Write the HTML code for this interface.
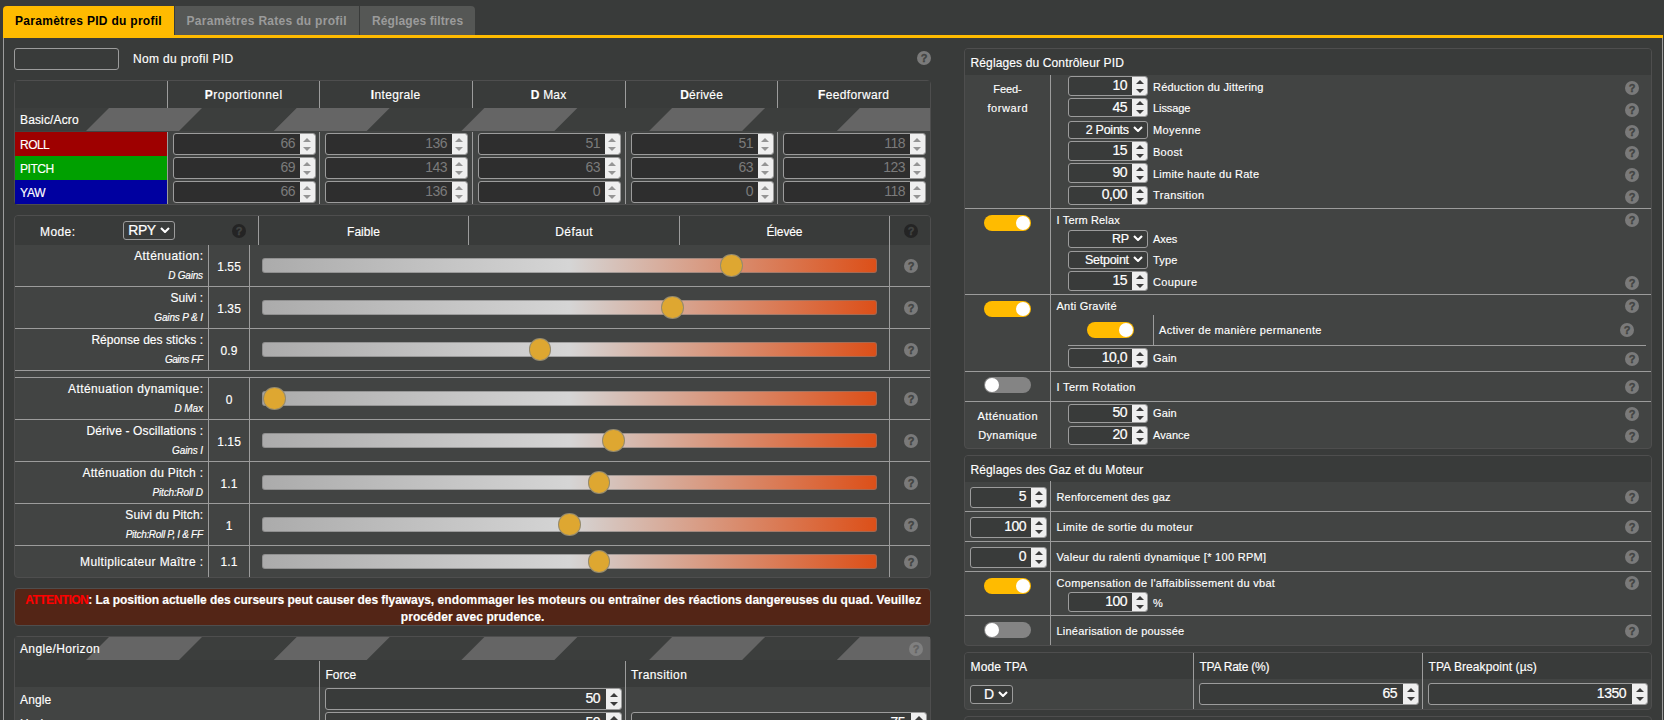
<!DOCTYPE html>
<html lang="fr"><head><meta charset="utf-8"><title>Betaflight - Réglages PID</title>
<style>
html,body{margin:0;padding:0;}
body{width:1664px;height:720px;overflow:hidden;background:#393b3a;position:relative;
 font-family:"Liberation Sans",sans-serif;font-size:12px;color:#fff;}
div,svg.abs{position:absolute;box-sizing:border-box;}
.t{height:20px;line-height:20px;white-space:nowrap;font-size:12px;-webkit-text-stroke:0.15px;}
.t.s11{font-size:11px;}
.t.sub{font-size:10px;font-style:italic;}
.t.b{font-weight:bold;}
.t b{font-weight:bold;}
.panel{border:1px solid #4e4e4e;border-radius:4px;background:#424443;}
.hd{background:#393b3a;}
.rowbg{background:#424443;}
.num{border:1px solid #9c9c9c;border-radius:3px;background:#393b3a;font-size:14px;letter-spacing:-0.5px;color:#fff;overflow:hidden;-webkit-text-stroke:0.2px;}
.num .v{position:absolute;right:21px;top:-0.5px;}
.num .sp{position:absolute;right:0;top:0;bottom:0;width:15px;background:#efefef;}
.num i{position:absolute;left:3.5px;width:0;height:0;border-left:4.1px solid transparent;border-right:4.1px solid transparent;}
.num i.up{top:calc(50% - 6.3px);border-bottom:4.4px solid #3c3c3c;}
.num i.dn{top:calc(50% + 2.7px);border-top:4.4px solid #3c3c3c;}
.num.sm .v{right:20px;}
.num.dis{background:#2e2e2e;color:#7b7b7b;-webkit-text-stroke:0;}
.num.dis .v{right:20px;}
.num.dis i{left:3.2px;border-left-width:4.4px;border-right-width:4.4px;}
.num.dis i.up{border-bottom:4.8px solid #959595;top:calc(50% - 6.1px);}
.num.dis i.dn{border-top:4.8px solid #959595;top:calc(50% + 3px);}
.sel{border:1px solid #9c9c9c;border-radius:3px;background:#393b3a;font-size:13.33px;color:#fff;-webkit-text-stroke:0.2px;}
.sel .v{position:absolute;right:18.2px;top:0;}
.sel .chev{position:absolute;right:4px;top:calc(50% - 3.8px);}
.help{width:14px;height:14px;border-radius:7px;background:#7a7a7a;color:#424443;font-weight:bold;font-size:11px;line-height:14px;text-align:center;-webkit-text-stroke:0.35px;}
.help.dark{background:#242424;color:#424443;}
.help.lt{background:#808080;color:#646464;}
.tog{width:47.5px;height:16px;border-radius:8px;margin-left:-0.4px;}
.tog.on{background:#ffbb00;}
.tog.off{background:#848484;}
.tog b{position:absolute;top:1px;width:14px;height:14px;border-radius:7px;background:#fff;}
.tog.on b{right:1px;}
.tog.off b{left:1px;}
.track{border-radius:3px;border:1px solid rgba(120,120,120,.55);
 background:linear-gradient(90deg,#ababab 0%,#d5d5d5 50%,#dc4f18 100%) border-box;}
.thumb{border-radius:50%;background:#dea731;border:1px solid rgba(125,130,130,.75);}
.tab{top:6px;height:29px;line-height:31px;font-weight:bold;font-size:12px;text-align:left;white-space:nowrap;}
</style></head><body>

<div class="tab" style="left:3px;width:171px;padding-left:12px;letter-spacing:0.29px;background:#ffbb00;color:#000;border-radius:4px 0 0 0;height:30px">Paramètres PID du profil</div>
<div class="tab" style="left:175px;width:184px;padding-left:11.5px;letter-spacing:0.291px;background:#555755;color:#9b9b9b">Paramètres Rates du profil</div>
<div class="tab" style="left:360px;width:115px;padding-left:12px;letter-spacing:0.114px;background:#555755;color:#9b9b9b;border-radius:0 4px 0 0">Réglages filtres</div>
<div class="" style="left:3px;top:35px;width:1660px;height:3px;background:#ffbb00"></div>
<div class="ln" style="left:3px;top:38px;width:1px;height:682px;background:#9c9c9c"></div>
<div class="ln" style="left:1662px;top:38px;width:1px;height:682px;background:#9c9c9c"></div>
<div class="" style="left:14px;top:48px;width:105px;height:22px;border:1px solid #9c9c9c;border-radius:3px;background:#393b3a"></div>
<div class="t " style="top:49px;letter-spacing:0.34px;left:133px;">Nom du profil PID</div>
<div class="help " style="left:917px;top:51px">?</div>
<div class="panel" style="left:14px;top:80px;width:917px;height:125px;background:#424443"></div>
<div class="hd" style="left:15px;top:81px;width:915px;height:27px;"></div>
<svg class="abs" style="left:15px;top:108px" width="915" height="23" viewBox="0 0 915 23"><rect width="915" height="23" fill="#3c3e3d"/><g fill="#656565"><polygon points="71.0,23 94.0,0 187.0,0 164.0,23"/><polygon points="258.7,23 281.7,0 374.7,0 351.7,23"/><polygon points="446.4,23 469.4,0 562.4,0 539.4,23"/><polygon points="634.0999999999999,23 657.0999999999999,0 750.0999999999999,0 727.0999999999999,23"/><polygon points="821.8,23 844.8,0 937.8,0 914.8,23"/></g></svg>
<div class="ln" style="left:167px;top:81px;width:1px;height:27px;background:#9c9c9c"></div>
<div class="ln" style="left:167px;top:132px;width:1px;height:72px;background:#9c9c9c"></div>
<div class="t " style="top:84.5px;letter-spacing:0.5px;left:93.75px;width:300px;text-align:center;"><b>P</b>roportionnel</div>
<div class="ln" style="left:319px;top:81px;width:1px;height:27px;background:#9c9c9c"></div>
<div class="ln" style="left:319px;top:132px;width:1px;height:72px;background:#9c9c9c"></div>
<div class="t " style="top:84.5px;letter-spacing:0.321px;left:245.6605px;width:300px;text-align:center;"><b>I</b>ntegrale</div>
<div class="ln" style="left:472px;top:81px;width:1px;height:27px;background:#9c9c9c"></div>
<div class="ln" style="left:472px;top:132px;width:1px;height:72px;background:#9c9c9c"></div>
<div class="t " style="top:84.5px;letter-spacing:0.198px;left:398.599px;width:300px;text-align:center;"><b>D</b> Max</div>
<div class="ln" style="left:625px;top:81px;width:1px;height:27px;background:#9c9c9c"></div>
<div class="ln" style="left:625px;top:132px;width:1px;height:72px;background:#9c9c9c"></div>
<div class="t " style="top:84.5px;letter-spacing:0.223px;left:551.6115px;width:300px;text-align:center;"><b>D</b>érivée</div>
<div class="ln" style="left:777px;top:81px;width:1px;height:27px;background:#9c9c9c"></div>
<div class="ln" style="left:777px;top:132px;width:1px;height:72px;background:#9c9c9c"></div>
<div class="t " style="top:84.5px;letter-spacing:0.374px;left:703.687px;width:300px;text-align:center;"><b>F</b>eedforward</div>
<div class="t " style="top:109.5px;letter-spacing:0.143px;left:20px;">Basic/Acro</div>
<div class="" style="left:15px;top:132px;width:152px;height:24px;background:#9e0000"></div>
<div class="t " style="top:134.5px;letter-spacing:-0.532px;left:20px;">ROLL</div>
<div class="num dis" style="left:173px;top:133.0px;width:143px;height:21.5px;line-height:19.5px"><span class="v">66</span><span class="sp"><i class="up"></i><i class="dn"></i></span></div>
<div class="num dis" style="left:325px;top:133.0px;width:143px;height:21.5px;line-height:19.5px"><span class="v">136</span><span class="sp"><i class="up"></i><i class="dn"></i></span></div>
<div class="num dis" style="left:478px;top:133.0px;width:143px;height:21.5px;line-height:19.5px"><span class="v">51</span><span class="sp"><i class="up"></i><i class="dn"></i></span></div>
<div class="num dis" style="left:631px;top:133.0px;width:143px;height:21.5px;line-height:19.5px"><span class="v">51</span><span class="sp"><i class="up"></i><i class="dn"></i></span></div>
<div class="num dis" style="left:783px;top:133.0px;width:143px;height:21.5px;line-height:19.5px"><span class="v">118</span><span class="sp"><i class="up"></i><i class="dn"></i></span></div>
<div class="" style="left:15px;top:156px;width:152px;height:24px;background:#00a000"></div>
<div class="t " style="top:158.5px;letter-spacing:-0.474px;left:20px;">PITCH</div>
<div class="num dis" style="left:173px;top:157.2px;width:143px;height:21.5px;line-height:19.5px"><span class="v">69</span><span class="sp"><i class="up"></i><i class="dn"></i></span></div>
<div class="num dis" style="left:325px;top:157.2px;width:143px;height:21.5px;line-height:19.5px"><span class="v">143</span><span class="sp"><i class="up"></i><i class="dn"></i></span></div>
<div class="num dis" style="left:478px;top:157.2px;width:143px;height:21.5px;line-height:19.5px"><span class="v">63</span><span class="sp"><i class="up"></i><i class="dn"></i></span></div>
<div class="num dis" style="left:631px;top:157.2px;width:143px;height:21.5px;line-height:19.5px"><span class="v">63</span><span class="sp"><i class="up"></i><i class="dn"></i></span></div>
<div class="num dis" style="left:783px;top:157.2px;width:143px;height:21.5px;line-height:19.5px"><span class="v">123</span><span class="sp"><i class="up"></i><i class="dn"></i></span></div>
<div class="" style="left:15px;top:180px;width:152px;height:24px;background:#0000a0"></div>
<div class="t " style="top:182.5px;letter-spacing:-0.192px;left:20px;">YAW</div>
<div class="num dis" style="left:173px;top:181.4px;width:143px;height:21.5px;line-height:19.5px"><span class="v">66</span><span class="sp"><i class="up"></i><i class="dn"></i></span></div>
<div class="num dis" style="left:325px;top:181.4px;width:143px;height:21.5px;line-height:19.5px"><span class="v">136</span><span class="sp"><i class="up"></i><i class="dn"></i></span></div>
<div class="num dis" style="left:478px;top:181.4px;width:143px;height:21.5px;line-height:19.5px"><span class="v">0</span><span class="sp"><i class="up"></i><i class="dn"></i></span></div>
<div class="num dis" style="left:631px;top:181.4px;width:143px;height:21.5px;line-height:19.5px"><span class="v">0</span><span class="sp"><i class="up"></i><i class="dn"></i></span></div>
<div class="num dis" style="left:783px;top:181.4px;width:143px;height:21.5px;line-height:19.5px"><span class="v">118</span><span class="sp"><i class="up"></i><i class="dn"></i></span></div>
<div class="panel" style="left:14px;top:215px;width:917px;height:363px;"></div>
<div class="hd" style="left:15px;top:216px;width:915px;height:29px;border-radius:3px 3px 0 0"></div>
<div class="t " style="top:221.5px;letter-spacing:0.402px;left:40px;">Mode:</div>
<div class="sel" style="left:123px;top:221px;width:52px;height:19px;line-height:17px;font-size:14px;letter-spacing:-0.4px"><span class="v">RPY</span><svg class="chev" viewBox="0 0 10 6" width="10" height="6"><path d="M1 1 L5 5 L9 1" fill="none" stroke="#fff" stroke-width="2.1"/></svg></div>
<div class="help dark" style="left:232px;top:224px">?</div>
<div class="ln" style="left:258px;top:216px;width:1px;height:29px;background:#9c9c9c"></div>
<div class="ln" style="left:468px;top:216px;width:1px;height:29px;background:#9c9c9c"></div>
<div class="ln" style="left:679px;top:216px;width:1px;height:29px;background:#9c9c9c"></div>
<div class="ln" style="left:889px;top:216px;width:1px;height:29px;background:#9c9c9c"></div>
<div class="t " style="top:221.5px;letter-spacing:0.056px;left:213.528px;width:300px;text-align:center;">Faible</div>
<div class="t " style="top:221.5px;letter-spacing:0.411px;left:424.2055px;width:300px;text-align:center;">Défaut</div>
<div class="t " style="top:221.5px;letter-spacing:-0.125px;left:634.4375px;width:300px;text-align:center;">Élevée</div>
<div class="help dark" style="left:904px;top:224px">?</div>
<div class="t " style="top:245.5px;letter-spacing:0.436px;right:1460.564px;text-align:right;">Atténuation:</div>
<div class="t sub" style="top:265.5px;letter-spacing:-0.232px;right:1461.232px;text-align:right;">D Gains</div>
<div class="t " style="top:256.5px;letter-spacing:0.105px;left:79.0525px;width:300px;text-align:center;">1.55</div>
<div class="ln" style="left:208px;top:245px;width:1px;height:42px;background:#9c9c9c"></div>
<div class="ln" style="left:249px;top:245px;width:1px;height:42px;background:#9c9c9c"></div>
<div class="ln" style="left:889px;top:245px;width:1px;height:42px;background:#9c9c9c"></div>
<div class="ln" style="left:15px;top:286px;width:915px;height:1px;background:#9c9c9c"></div>
<div class="track" style="left:262px;top:258px;width:615px;height:15px;"></div>
<div class="thumb" style="left:720.1px;top:254.3px;width:22.6px;height:22.6px;"></div>
<div class="help " style="left:904px;top:259px">?</div>
<div class="t " style="top:287.5px;letter-spacing:-0.044px;right:1461.044px;text-align:right;">Suivi :</div>
<div class="t sub" style="top:307.5px;letter-spacing:-0.155px;right:1461.155px;text-align:right;">Gains P &amp; I</div>
<div class="t " style="top:298.5px;letter-spacing:0.105px;left:79.0525px;width:300px;text-align:center;">1.35</div>
<div class="ln" style="left:208px;top:287px;width:1px;height:42px;background:#9c9c9c"></div>
<div class="ln" style="left:249px;top:287px;width:1px;height:42px;background:#9c9c9c"></div>
<div class="ln" style="left:889px;top:287px;width:1px;height:42px;background:#9c9c9c"></div>
<div class="ln" style="left:15px;top:328px;width:915px;height:1px;background:#9c9c9c"></div>
<div class="track" style="left:262px;top:300px;width:615px;height:15px;"></div>
<div class="thumb" style="left:661.2px;top:296.3px;width:22.6px;height:22.6px;"></div>
<div class="help " style="left:904px;top:301px">?</div>
<div class="t " style="top:329.5px;letter-spacing:0.047px;right:1460.953px;text-align:right;">Réponse des sticks :</div>
<div class="t sub" style="top:349.5px;letter-spacing:-0.427px;right:1461.427px;text-align:right;">Gains FF</div>
<div class="t " style="top:340.5px;letter-spacing:0.078px;left:79.039px;width:300px;text-align:center;">0.9</div>
<div class="ln" style="left:208px;top:329px;width:1px;height:42px;background:#9c9c9c"></div>
<div class="ln" style="left:249px;top:329px;width:1px;height:42px;background:#9c9c9c"></div>
<div class="ln" style="left:889px;top:329px;width:1px;height:42px;background:#9c9c9c"></div>
<div class="ln" style="left:15px;top:370px;width:915px;height:1px;background:#9c9c9c"></div>
<div class="track" style="left:262px;top:342px;width:615px;height:15px;"></div>
<div class="thumb" style="left:528.5px;top:338.3px;width:22.6px;height:22.6px;"></div>
<div class="help " style="left:904px;top:343px">?</div>
<div class="t " style="top:378.5px;letter-spacing:0.427px;right:1460.573px;text-align:right;">Atténuation dynamique:</div>
<div class="t sub" style="top:398.5px;letter-spacing:-0.118px;right:1461.118px;text-align:right;">D Max</div>
<div class="t " style="top:389.5px;letter-spacing:0.187px;left:79.0935px;width:300px;text-align:center;">0</div>
<div class="ln" style="left:208px;top:378px;width:1px;height:42px;background:#9c9c9c"></div>
<div class="ln" style="left:249px;top:378px;width:1px;height:42px;background:#9c9c9c"></div>
<div class="ln" style="left:889px;top:378px;width:1px;height:42px;background:#9c9c9c"></div>
<div class="ln" style="left:15px;top:419px;width:915px;height:1px;background:#9c9c9c"></div>
<div class="track" style="left:262px;top:391px;width:615px;height:15px;"></div>
<div class="thumb" style="left:263.2px;top:387.3px;width:22.6px;height:22.6px;"></div>
<div class="help " style="left:904px;top:392px">?</div>
<div class="t " style="top:420.5px;letter-spacing:0.148px;right:1460.852px;text-align:right;">Dérive - Oscillations :</div>
<div class="t sub" style="top:440.5px;letter-spacing:-0.126px;right:1461.126px;text-align:right;">Gains I</div>
<div class="t " style="top:431.5px;letter-spacing:0.105px;left:79.0525px;width:300px;text-align:center;">1.15</div>
<div class="ln" style="left:208px;top:420px;width:1px;height:42px;background:#9c9c9c"></div>
<div class="ln" style="left:249px;top:420px;width:1px;height:42px;background:#9c9c9c"></div>
<div class="ln" style="left:889px;top:420px;width:1px;height:42px;background:#9c9c9c"></div>
<div class="ln" style="left:15px;top:461px;width:915px;height:1px;background:#9c9c9c"></div>
<div class="track" style="left:262px;top:433px;width:615px;height:15px;"></div>
<div class="thumb" style="left:602.2px;top:429.3px;width:22.6px;height:22.6px;"></div>
<div class="help " style="left:904px;top:434px">?</div>
<div class="t " style="top:462.5px;letter-spacing:0.311px;right:1460.689px;text-align:right;">Atténuation du Pitch :</div>
<div class="t sub" style="top:482.5px;letter-spacing:-0.153px;right:1461.153px;text-align:right;">Pitch:Roll D</div>
<div class="t " style="top:473.5px;letter-spacing:0.078px;left:79.039px;width:300px;text-align:center;">1.1</div>
<div class="ln" style="left:208px;top:462px;width:1px;height:42px;background:#9c9c9c"></div>
<div class="ln" style="left:249px;top:462px;width:1px;height:42px;background:#9c9c9c"></div>
<div class="ln" style="left:889px;top:462px;width:1px;height:42px;background:#9c9c9c"></div>
<div class="ln" style="left:15px;top:503px;width:915px;height:1px;background:#9c9c9c"></div>
<div class="track" style="left:262px;top:475px;width:615px;height:15px;"></div>
<div class="thumb" style="left:587.5px;top:471.3px;width:22.6px;height:22.6px;"></div>
<div class="help " style="left:904px;top:476px">?</div>
<div class="t " style="top:504.5px;letter-spacing:0.116px;right:1460.884px;text-align:right;">Suivi du Pitch:</div>
<div class="t sub" style="top:524.5px;letter-spacing:-0.309px;right:1461.309px;text-align:right;">Pitch:Roll P, I &amp; FF</div>
<div class="t " style="top:515.5px;letter-spacing:0.187px;left:79.0935px;width:300px;text-align:center;">1</div>
<div class="ln" style="left:208px;top:504px;width:1px;height:42px;background:#9c9c9c"></div>
<div class="ln" style="left:249px;top:504px;width:1px;height:42px;background:#9c9c9c"></div>
<div class="ln" style="left:889px;top:504px;width:1px;height:42px;background:#9c9c9c"></div>
<div class="ln" style="left:15px;top:545px;width:915px;height:1px;background:#9c9c9c"></div>
<div class="track" style="left:262px;top:517px;width:615px;height:15px;"></div>
<div class="thumb" style="left:558.0px;top:513.3px;width:22.6px;height:22.6px;"></div>
<div class="help " style="left:904px;top:518px">?</div>
<div class="t " style="top:552px;letter-spacing:0.377px;right:1460.623px;text-align:right;">Multiplicateur Maître :</div>
<div class="t " style="top:552.0px;letter-spacing:0.078px;left:79.039px;width:300px;text-align:center;">1.1</div>
<div class="ln" style="left:208px;top:546px;width:1px;height:31px;background:#9c9c9c"></div>
<div class="ln" style="left:249px;top:546px;width:1px;height:31px;background:#9c9c9c"></div>
<div class="ln" style="left:889px;top:546px;width:1px;height:31px;background:#9c9c9c"></div>
<div class="track" style="left:262px;top:554px;width:615px;height:15px;"></div>
<div class="thumb" style="left:587.5px;top:550.3px;width:22.6px;height:22.6px;"></div>
<div class="help " style="left:904px;top:554.5px">?</div>
<div class="ln" style="left:15px;top:377px;width:915px;height:1px;background:#9c9c9c"></div>
<div class="" style="left:14px;top:588px;width:917px;height:38px;border:1px solid #4e4e4e;border-radius:4px;background:#532516"></div>
<div class="t b" style="left:25.3px;top:590.6px;height:18px;line-height:18px;white-space:pre"><span style="color:#ff0000;letter-spacing:-0.541px">ATTENTION</span><span style="letter-spacing:-0.039px">: La position actuelle </span><span style="letter-spacing:-0.039px">des curseurs peut </span><span style="letter-spacing:-0.064px">causer des flyaways, </span><span style="letter-spacing:0.131px">endommager les moteurs </span><span style="letter-spacing:0.112px">ou entraîner des </span><span style="letter-spacing:-0.007px">réactions dangereuses </span><span style="letter-spacing:0.091px">du quad. Veuillez</span></div>
<div class="t b" style="left:400.8px;top:608.4px;height:18px;line-height:18px;letter-spacing:0.067px">procéder avec prudence.</div>
<div class="panel" style="left:14px;top:636px;width:917px;height:100px;background:#424443"></div>
<svg class="abs" style="left:15px;top:637px" width="915" height="23" viewBox="0 0 915 23"><rect width="915" height="23" fill="#3c3e3d"/><g fill="#656565"><polygon points="71.0,23 94.0,0 187.0,0 164.0,23"/><polygon points="258.7,23 281.7,0 374.7,0 351.7,23"/><polygon points="446.4,23 469.4,0 562.4,0 539.4,23"/><polygon points="634.0999999999999,23 657.0999999999999,0 750.0999999999999,0 727.0999999999999,23"/><polygon points="821.8,23 844.8,0 937.8,0 914.8,23"/></g></svg>
<div class="t " style="top:638.5px;letter-spacing:0.353px;left:20px;">Angle/Horizon</div>
<div class="help lt" style="left:909px;top:641.5px">?</div>
<div class="hd" style="left:15px;top:660px;width:915px;height:27px;"></div>
<div class="ln" style="left:319px;top:661px;width:1px;height:60px;background:#9c9c9c"></div>
<div class="ln" style="left:625px;top:661px;width:1px;height:60px;background:#9c9c9c"></div>
<div class="t " style="top:664.5px;letter-spacing:0.022px;left:325.5px;">Force</div>
<div class="t " style="top:664.5px;letter-spacing:0.398px;left:631px;">Transition</div>
<div class="t " style="top:690px;letter-spacing:0.122px;left:20px;">Angle</div>
<div class="num" style="left:325px;top:688.4px;width:297px;height:21.4px;line-height:19.4px"><span class="v">50</span><span class="sp"><i class="up"></i><i class="dn"></i></span></div>
<div class="t " style="top:714px;letter-spacing:0.416px;left:20px;">Horizon</div>
<div class="num" style="left:325px;top:712px;width:297px;height:21.4px;line-height:19.4px"><span class="v">50</span><span class="sp"><i class="up"></i><i class="dn"></i></span></div>
<div class="num" style="left:631px;top:712px;width:296px;height:21.4px;line-height:19.4px"><span class="v">75</span><span class="sp"><i class="up"></i><i class="dn"></i></span></div>
<div class="panel" style="left:964px;top:48px;width:688px;height:401px;"></div>
<div class="hd" style="left:965px;top:49px;width:686px;height:26px;border-radius:3px 3px 0 0"></div>
<div class="t " style="top:52.5px;letter-spacing:0.129px;left:970.5px;">Réglages du Contrôleur PID</div>
<div class="ln" style="left:1050px;top:75px;width:1px;height:373px;background:#9c9c9c"></div>
<div class="t s11" style="top:78.5px;letter-spacing:-0.087px;left:857.4565px;width:300px;text-align:center;">Feed-</div>
<div class="t s11" style="top:97.5px;letter-spacing:0.584px;left:857.792px;width:300px;text-align:center;">forward</div>
<div class="num sm" style="left:1068px;top:76.3px;width:80px;height:19.4px;line-height:17.4px"><span class="v">10</span><span class="sp"><i class="up"></i><i class="dn"></i></span></div>
<div class="t s11" style="top:76.5px;letter-spacing:0.194px;left:1153px;">Réduction du Jittering</div>
<div class="help " style="left:1625px;top:81.0px">?</div>
<div class="num sm" style="left:1068px;top:98.1px;width:80px;height:19.4px;line-height:17.4px"><span class="v">45</span><span class="sp"><i class="up"></i><i class="dn"></i></span></div>
<div class="t s11" style="top:98.25px;letter-spacing:-0.088px;left:1153px;">Lissage</div>
<div class="help " style="left:1625px;top:102.75px">?</div>
<div class="sel" style="left:1068px;top:120.8px;width:80px;height:18px;line-height:16px;font-size:12.5px;letter-spacing:-0.25px"><span class="v">2 Points</span><svg class="chev" viewBox="0 0 10 6" width="10" height="6"><path d="M1 1 L5 5 L9 1" fill="none" stroke="#fff" stroke-width="2.1"/></svg></div>
<div class="t s11" style="top:120.0px;letter-spacing:0.387px;left:1153px;">Moyenne</div>
<div class="help " style="left:1625px;top:124.5px">?</div>
<div class="num sm" style="left:1068px;top:141.4px;width:80px;height:19.4px;line-height:17.4px"><span class="v">15</span><span class="sp"><i class="up"></i><i class="dn"></i></span></div>
<div class="t s11" style="top:141.75px;letter-spacing:0.283px;left:1153px;">Boost</div>
<div class="help " style="left:1625px;top:146.25px">?</div>
<div class="num sm" style="left:1068px;top:163.4px;width:80px;height:19.4px;line-height:17.4px"><span class="v">90</span><span class="sp"><i class="up"></i><i class="dn"></i></span></div>
<div class="t s11" style="top:163.5px;letter-spacing:0.238px;left:1153px;">Limite haute du Rate</div>
<div class="help " style="left:1625px;top:168.0px">?</div>
<div class="num sm" style="left:1068px;top:185.5px;width:80px;height:19.4px;line-height:17.4px"><span class="v">0,00</span><span class="sp"><i class="up"></i><i class="dn"></i></span></div>
<div class="t s11" style="top:185.25px;letter-spacing:0.365px;left:1153px;">Transition</div>
<div class="help " style="left:1625px;top:189.75px">?</div>
<div class="ln" style="left:965px;top:208px;width:686px;height:1px;background:#9c9c9c"></div>
<div class="tog on" style="left:984px;top:215px"><b></b></div>
<div class="t s11" style="top:209.5px;letter-spacing:0.155px;left:1056.5px;">I Term Relax</div>
<div class="help " style="left:1625px;top:213px">?</div>
<div class="sel" style="left:1068px;top:230px;width:80px;height:18px;line-height:16px;font-size:12.5px;letter-spacing:-0.25px"><span class="v">RP</span><svg class="chev" viewBox="0 0 10 6" width="10" height="6"><path d="M1 1 L5 5 L9 1" fill="none" stroke="#fff" stroke-width="2.1"/></svg></div>
<div class="t s11" style="top:229px;letter-spacing:-0.078px;left:1153px;">Axes</div>
<div class="sel" style="left:1068px;top:251px;width:80px;height:18px;line-height:16px;font-size:12.5px;letter-spacing:-0.25px"><span class="v">Setpoint</span><svg class="chev" viewBox="0 0 10 6" width="10" height="6"><path d="M1 1 L5 5 L9 1" fill="none" stroke="#fff" stroke-width="2.1"/></svg></div>
<div class="t s11" style="top:250px;letter-spacing:0.173px;left:1153px;">Type</div>
<div class="num sm" style="left:1068px;top:271.4px;width:80px;height:19.4px;line-height:17.4px"><span class="v">15</span><span class="sp"><i class="up"></i><i class="dn"></i></span></div>
<div class="t s11" style="top:271.5px;letter-spacing:0.327px;left:1153px;">Coupure</div>
<div class="help " style="left:1625px;top:276px">?</div>
<div class="ln" style="left:965px;top:294px;width:686px;height:1px;background:#9c9c9c"></div>
<div class="tog on" style="left:984px;top:301px"><b></b></div>
<div class="t s11" style="top:295.5px;letter-spacing:0.23px;left:1056.5px;">Anti Gravité</div>
<div class="help " style="left:1625px;top:299px">?</div>
<div class="tog on" style="left:1087px;top:322px"><b></b></div>
<div class="ln" style="left:1153px;top:315px;width:1px;height:30px;background:#9c9c9c"></div>
<div class="ln" style="left:1068px;top:345px;width:578px;height:1px;background:#9c9c9c"></div>
<div class="t s11" style="top:319.5px;letter-spacing:0.32px;left:1159px;">Activer de manière permanente</div>
<div class="help " style="left:1620px;top:323px">?</div>
<div class="num sm" style="left:1068px;top:348.4px;width:80px;height:19.4px;line-height:17.4px"><span class="v">10,0</span><span class="sp"><i class="up"></i><i class="dn"></i></span></div>
<div class="t s11" style="top:347.5px;letter-spacing:0.106px;left:1153px;">Gain</div>
<div class="help " style="left:1625px;top:352px">?</div>
<div class="ln" style="left:965px;top:371px;width:686px;height:1px;background:#9c9c9c"></div>
<div class="tog off" style="left:984px;top:377px"><b></b></div>
<div class="t s11" style="top:376.5px;letter-spacing:0.325px;left:1056.5px;">I Term Rotation</div>
<div class="help " style="left:1625px;top:380px">?</div>
<div class="ln" style="left:965px;top:401px;width:686px;height:1px;background:#9c9c9c"></div>
<div class="t s11" style="top:405.5px;letter-spacing:0.448px;left:857.724px;width:300px;text-align:center;">Atténuation</div>
<div class="t s11" style="top:424.5px;letter-spacing:0.385px;left:857.6925px;width:300px;text-align:center;">Dynamique</div>
<div class="num sm" style="left:1068px;top:403.7px;width:80px;height:19.4px;line-height:17.4px"><span class="v">50</span><span class="sp"><i class="up"></i><i class="dn"></i></span></div>
<div class="t s11" style="top:403px;letter-spacing:0.106px;left:1153px;">Gain</div>
<div class="help " style="left:1625px;top:407px">?</div>
<div class="num sm" style="left:1068px;top:425.5px;width:80px;height:19.4px;line-height:17.4px"><span class="v">20</span><span class="sp"><i class="up"></i><i class="dn"></i></span></div>
<div class="t s11" style="top:424.5px;letter-spacing:0.046px;left:1153px;">Avance</div>
<div class="help " style="left:1625px;top:429px">?</div>
<div class="panel" style="left:964px;top:455px;width:688px;height:191px;"></div>
<div class="hd" style="left:965px;top:456px;width:686px;height:26px;border-radius:3px 3px 0 0"></div>
<div class="t " style="top:459.5px;letter-spacing:0.119px;left:970.5px;">Réglages des Gaz et du Moteur</div>
<div class="ln" style="left:1050px;top:481px;width:1px;height:164px;background:#9c9c9c"></div>
<div class="num sm" style="left:970px;top:486.6px;width:77px;height:21.5px;line-height:19.5px"><span class="v">5</span><span class="sp"><i class="up"></i><i class="dn"></i></span></div>
<div class="t s11" style="top:486.5px;letter-spacing:0.176px;left:1056.5px;">Renforcement des gaz</div>
<div class="help " style="left:1625px;top:490px">?</div>
<div class="ln" style="left:965px;top:511px;width:686px;height:1px;background:#9c9c9c"></div>
<div class="num sm" style="left:970px;top:516.6px;width:77px;height:21.5px;line-height:19.5px"><span class="v">100</span><span class="sp"><i class="up"></i><i class="dn"></i></span></div>
<div class="t s11" style="top:516.5px;letter-spacing:0.37px;left:1056.5px;">Limite de sortie du moteur</div>
<div class="help " style="left:1625px;top:520px">?</div>
<div class="ln" style="left:965px;top:541px;width:686px;height:1px;background:#9c9c9c"></div>
<div class="num sm" style="left:970px;top:546.6px;width:77px;height:21.5px;line-height:19.5px"><span class="v">0</span><span class="sp"><i class="up"></i><i class="dn"></i></span></div>
<div class="t s11" style="top:546.5px;letter-spacing:0.29px;left:1056.5px;">Valeur du ralenti dynamique [* 100 RPM]</div>
<div class="help " style="left:1625px;top:550px">?</div>
<div class="ln" style="left:965px;top:571px;width:686px;height:1px;background:#9c9c9c"></div>
<div class="tog on" style="left:984px;top:578px"><b></b></div>
<div class="t s11" style="top:572.5px;letter-spacing:0.307px;left:1056.5px;">Compensation de l'affaiblissement du vbat</div>
<div class="help " style="left:1625px;top:576px">?</div>
<div class="num sm" style="left:1068px;top:592.2px;width:80px;height:19.6px;line-height:17.6px"><span class="v">100</span><span class="sp"><i class="up"></i><i class="dn"></i></span></div>
<div class="t s11" style="top:593px;letter-spacing:-0.725px;left:1153px;">%</div>
<div class="ln" style="left:965px;top:615px;width:686px;height:1px;background:#9c9c9c"></div>
<div class="tog off" style="left:984px;top:622px"><b></b></div>
<div class="t s11" style="top:620.5px;letter-spacing:0.23px;left:1056.5px;">Linéarisation de poussée</div>
<div class="help " style="left:1625px;top:624px">?</div>
<div class="panel" style="left:964px;top:652px;width:688px;height:58px;"></div>
<div class="hd" style="left:965px;top:653px;width:686px;height:26px;border-radius:3px 3px 0 0"></div>
<div class="ln" style="left:1193px;top:653px;width:1px;height:56px;background:#9c9c9c"></div>
<div class="ln" style="left:1422px;top:653px;width:1px;height:56px;background:#9c9c9c"></div>
<div class="t " style="top:657px;letter-spacing:0.145px;left:970.5px;">Mode TPA</div>
<div class="t " style="top:657px;letter-spacing:-0.228px;left:1199.5px;">TPA Rate (%)</div>
<div class="t " style="top:657px;letter-spacing:0.082px;left:1428.5px;">TPA Breakpoint (µs)</div>
<div class="sel" style="left:970px;top:685px;width:43px;height:19px;line-height:17px;font-size:14px;letter-spacing:-0.4px"><span class="v">D</span><svg class="chev" viewBox="0 0 10 6" width="10" height="6"><path d="M1 1 L5 5 L9 1" fill="none" stroke="#fff" stroke-width="2.1"/></svg></div>
<div class="num" style="left:1199px;top:683.2px;width:220px;height:21.6px;line-height:19.6px"><span class="v">65</span><span class="sp"><i class="up"></i><i class="dn"></i></span></div>
<div class="num" style="left:1428px;top:683.2px;width:220px;height:21.6px;line-height:19.6px"><span class="v">1350</span><span class="sp"><i class="up"></i><i class="dn"></i></span></div>
<div class="panel" style="left:964px;top:715.5px;width:688px;height:40px;background:#393b3a"></div>
</body></html>
